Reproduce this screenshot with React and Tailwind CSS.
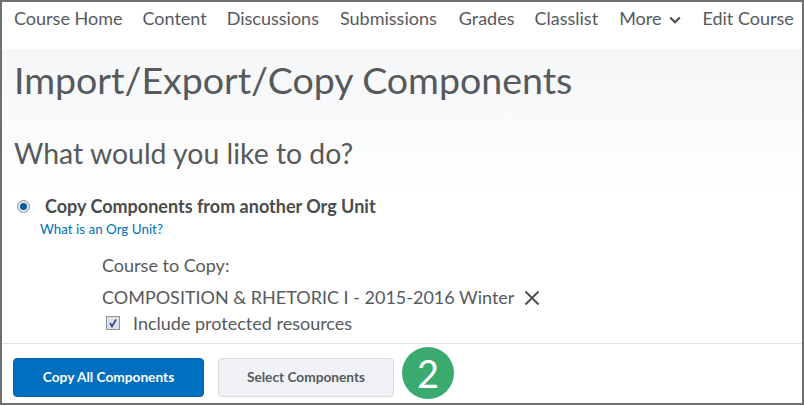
import React from "react";

const nav = [
  ["Course Home", "mr-[20px]"],
  ["Content", "mr-[20px]"],
  ["Discussions", "mr-[21px]"],
  ["Submissions", "mr-[22px]"],
  ["Grades", "mr-[20px]"],
  ["Classlist", "mr-[21px]"],
];

export default function App() {
  return (
    <div className="h-[405px] w-[804px] overflow-hidden border-2 border-[#6f6f6f] bg-white font-['Lato',sans-serif] text-[#565a5c] flex flex-col">
      <nav className="h-[47px] shrink-0 flex items-start pl-3 pt-[6px] text-[18px] leading-5 bg-white">
        {nav.map(([t, c]) => (
          <span key={t} className={c}>{t}</span>
        ))}
        <span className="mr-[21px] flex items-center">
          More
          <svg className="ml-[8px] mt-[3px]" width="12" height="8" viewBox="0 0 12 8" fill="none">
            <path d="M1.2 1.5 6 6.2 10.8 1.5" stroke="#494c4e" strokeWidth="2.2" />
          </svg>
        </span>
        <span>Edit Course</span>
      </nav>
      <main className="flex-1 min-h-0 bg-gradient-to-b from-[#f5f6f8] via-white to-white pl-3 overflow-hidden">
        <h1 className="text-[37.5px] leading-[44px] mt-[9px] font-normal">Import/Export/Copy Components</h1>
        <h2 className="text-[28.4px] leading-9 mt-[33px] font-normal">What would you like to do?</h2>
        <div className="mt-[25px] flex items-center h-5 -ml-[12px]">
          <span className="ml-[15px] w-[13px] h-[13px] rounded-full border border-[#8f939a] bg-[#e3e5ea] flex items-center justify-center">
            <span className="w-[7px] h-[7px] rounded-full bg-[#0b5c9e]" />
          </span>
          <span className="ml-[15px] text-[18px] font-bold leading-5 text-[#494c4e]">Copy Components from another Org Unit</span>
        </div>
        <div className="mt-[5px] ml-[26px] text-[13.4px] leading-4 text-[#006fbf]">What is an Org Unit?</div>
        <div className="mt-[18px] ml-[88px] text-[18px] leading-5">Course to Copy:</div>
        <div className="mt-[12px] ml-[88px] text-[18px] leading-5 flex items-center">
          COMPOSITION &amp; RHETORIC I - 2015-2016 Winter
          <svg className="ml-[10px] mt-[2px]" width="16" height="16" viewBox="0 0 16 16" fill="none">
            <path d="M1.5 1.5 14.5 14.5M14.5 1.5 1.5 14.5" stroke="#494c4e" strokeWidth="1.8" />
          </svg>
        </div>
        <div className="mt-[6px] ml-[92px] flex items-center h-5">
          <span className="w-[14px] h-[14px] border border-[#8f939a] bg-[#dfe1e6] flex items-center justify-center">
            <svg width="10" height="10" viewBox="0 0 10 10" fill="none">
              <path d="M2 5 4 8.5 8 1.5" stroke="#2f3f9e" strokeWidth="1.6" />
            </svg>
          </span>
          <span className="ml-[13px] text-[18px] leading-5">Include protected resources</span>
        </div>
      </main>
      <footer className="h-[60px] shrink-0 border-t border-[#dfe1e6] bg-white flex items-start pl-[11px] pt-[14px] gap-[14px]">
        <button className="w-[191px] h-[39px] rounded-[4px] bg-[#006fbf] border border-[#0a5ea3] text-white text-[13.7px] font-bold">Copy All Components</button>
        <button className="w-[176px] h-[39px] rounded-[4px] bg-[#f1f2f5] border border-[#d8dbe2] text-[#565a5c] text-[13.7px] font-bold">Select Components</button>
        <span className="-ml-[6px] -mt-[11px] w-[52px] h-[52px] rounded-full bg-[#3aaa6f] text-white text-[38px] font-normal leading-none flex items-center justify-center">2</span>
      </footer>
    </div>
  );
}
